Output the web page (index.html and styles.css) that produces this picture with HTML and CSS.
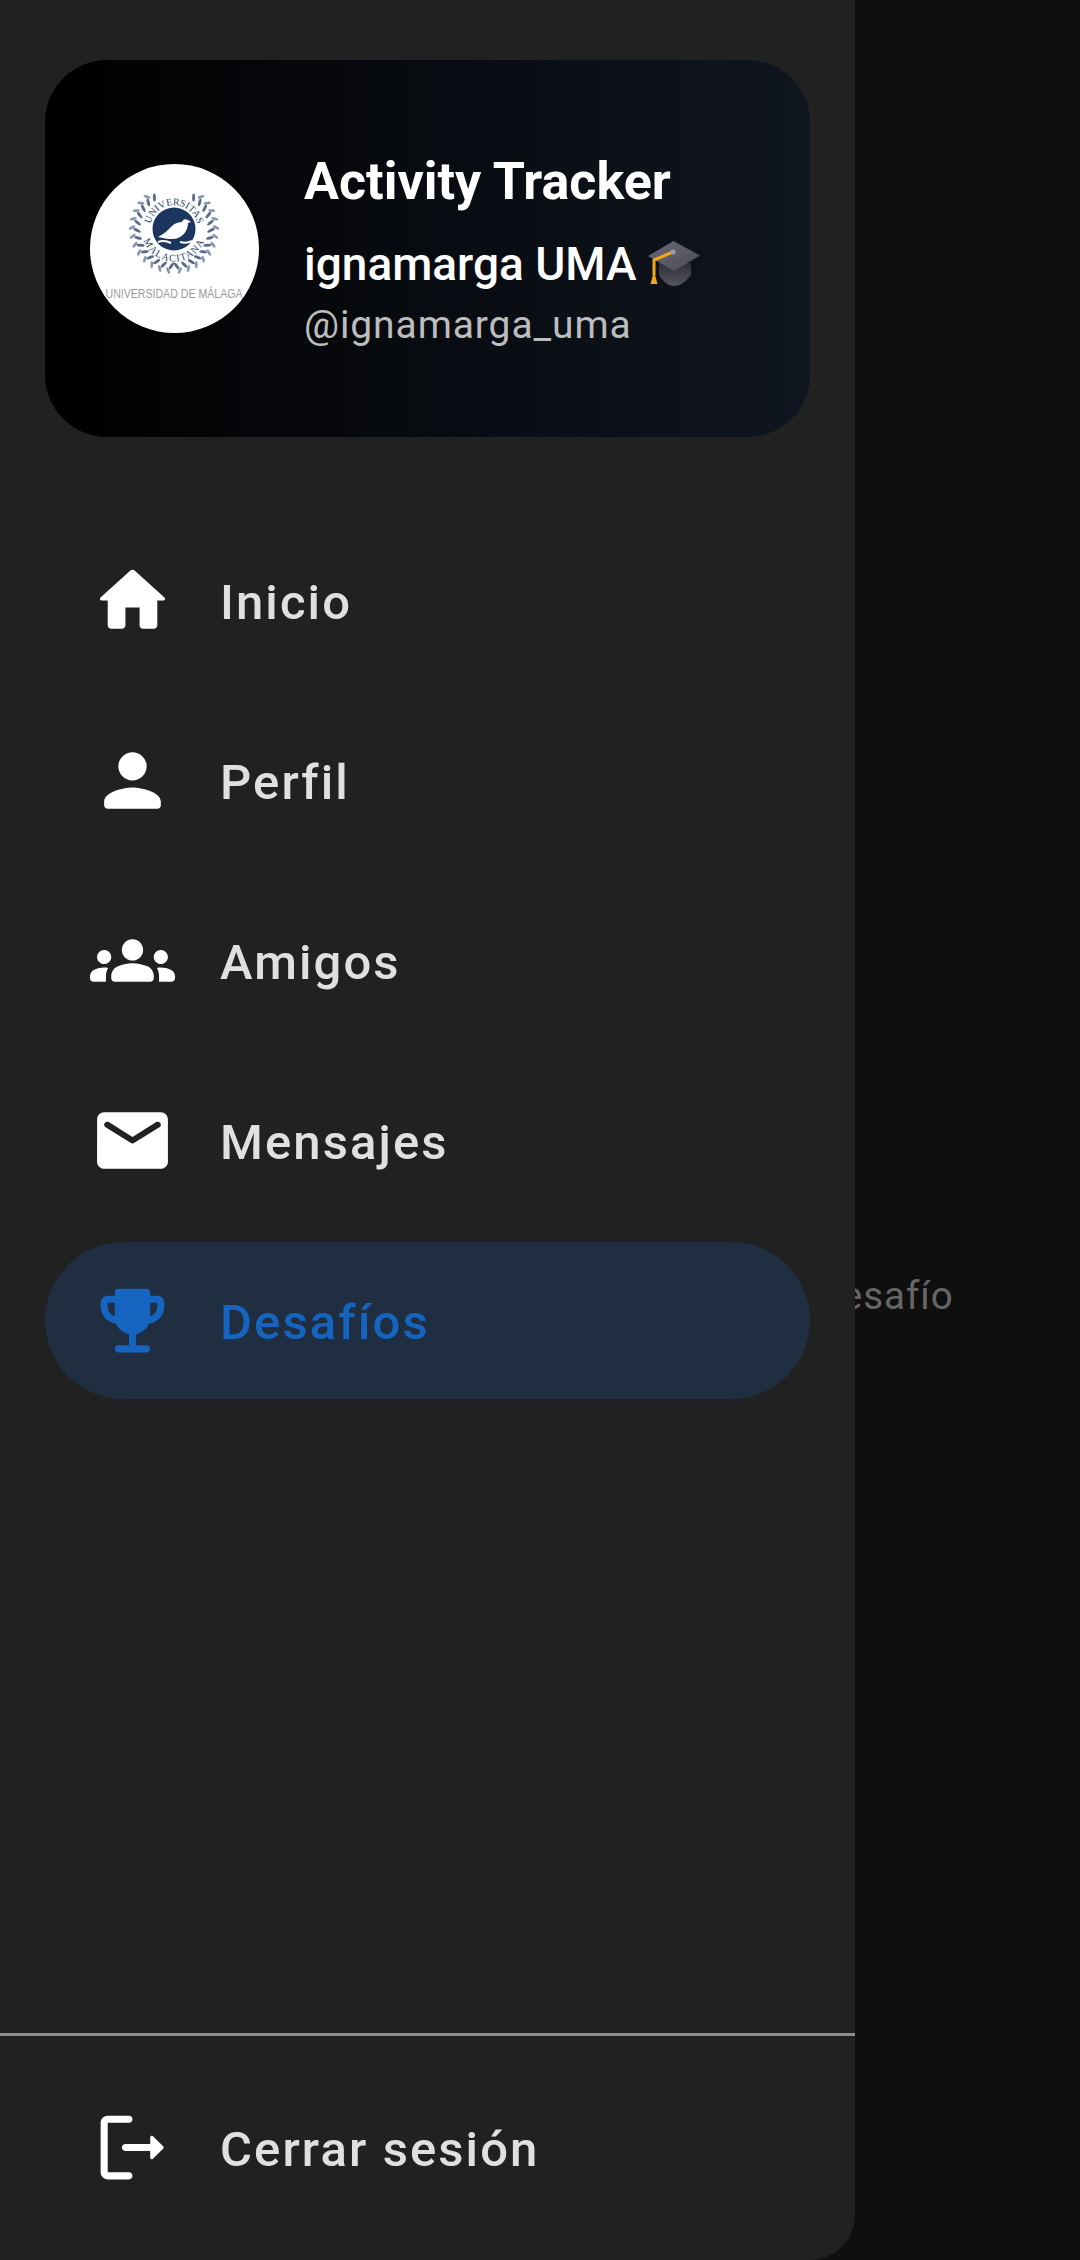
FILE: index.html
```html
<!DOCTYPE html>
<html lang="es">
<head>
<meta charset="utf-8">
<title>Activity Tracker</title>
<link rel="stylesheet" href="styles.css">
</head>
<body>
<div class="screen">
  <aside class="drawer">
    <header class="profile">
      <div class="avatar">
        <svg class="seal" viewBox="0 0 169 169">
          <defs>
            <path id="arcTop" d="M61.400 73.200a24 24 0 1 1 45.200 0"/>
            <path id="arcBottom" d="M53.400 54a32.500 32.500 0 1 0 61.200 0"/>
            <ellipse id="leaf" cx="0" cy="-37" rx="1.500" ry="4" fill="#5a6c8e"/>
            <ellipse id="leafOuter" cx="0" cy="-42" rx="1.400" ry="3.600" fill="#8795af"/>
            <g id="halfWreath">
              <use href="#leaf" transform="rotate(-176) rotate(30 0 -37)"/><use href="#leafOuter" transform="rotate(-172) rotate(-30 0 -42)"/>
              <use href="#leaf" transform="rotate(-164) rotate(30 0 -37)"/><use href="#leafOuter" transform="rotate(-160) rotate(-30 0 -42)"/>
              <use href="#leaf" transform="rotate(-152) rotate(30 0 -37)"/><use href="#leafOuter" transform="rotate(-148) rotate(-30 0 -42)"/>
              <use href="#leaf" transform="rotate(-140) rotate(30 0 -37)"/><use href="#leafOuter" transform="rotate(-136) rotate(-30 0 -42)"/>
              <use href="#leaf" transform="rotate(-128) rotate(30 0 -37)"/><use href="#leafOuter" transform="rotate(-124) rotate(-30 0 -42)"/>
              <use href="#leaf" transform="rotate(-116) rotate(30 0 -37)"/><use href="#leafOuter" transform="rotate(-112) rotate(-30 0 -42)"/>
              <use href="#leaf" transform="rotate(-104) rotate(30 0 -37)"/><use href="#leafOuter" transform="rotate(-100) rotate(-30 0 -42)"/>
              <use href="#leaf" transform="rotate(-92) rotate(30 0 -37)"/><use href="#leafOuter" transform="rotate(-88) rotate(-30 0 -42)"/>
              <use href="#leaf" transform="rotate(-80) rotate(30 0 -37)"/><use href="#leafOuter" transform="rotate(-76) rotate(-30 0 -42)"/>
              <use href="#leaf" transform="rotate(-68) rotate(30 0 -37)"/><use href="#leafOuter" transform="rotate(-64) rotate(-30 0 -42)"/>
              <use href="#leaf" transform="rotate(-56) rotate(30 0 -37)"/><use href="#leafOuter" transform="rotate(-52) rotate(-30 0 -42)"/>
              <use href="#leaf" transform="rotate(-44) rotate(30 0 -37)"/><use href="#leafOuter" transform="rotate(-40) rotate(-30 0 -42)"/>
              <use href="#leaf" transform="rotate(-32) rotate(30 0 -37)"/>
            </g>
          </defs>
          <g transform="translate(84 65)">
            <use href="#halfWreath"/>
            <use href="#halfWreath" transform="scale(-1 1)"/>
          </g>
          <circle cx="84" cy="65" r="21.500" fill="#1c355e"/>
          <path d="M68 73C74 70 78 66 82 62 85 59 89 58 92 58 92 56 95 54 98 56L101 58 98 59C98 65 95 71 88 74 83 76 76 75 68 73z" fill="#fff"/>
          <path d="M68 78c5-2 9-1 13 1M90 78c4 1 8 1 12-1" stroke="#fff" stroke-width="2" fill="none"/>
          <text class="seal-ring" text-anchor="middle"><textPath href="#arcTop" startOffset="50%">UNIVERSITAS</textPath></text>
          <text class="seal-ring seal-ring-wide" text-anchor="middle"><textPath href="#arcBottom" startOffset="50%">MALACITANA</textPath></text>
          <text class="seal-name" x="84" y="134" text-anchor="middle" textLength="137" lengthAdjust="spacingAndGlyphs">UNIVERSIDAD DE MÁLAGA</text>
        </svg>
      </div>
      <div class="identity">
        <div class="app-name">Activity Tracker</div>
        <div class="user-name">ignamarga UMA
          <svg class="cap" viewBox="0 0 52 46">
            <defs>
              <linearGradient id="capTop" x1="0" y1="0" x2="1" y2="1"><stop offset="0" stop-color="#6a6a76"/><stop offset="1" stop-color="#4a4a57"/></linearGradient>
              <linearGradient id="capBody" x1="0" y1="0" x2="0" y2="1"><stop offset="0" stop-color="#2e2e38"/><stop offset="1" stop-color="#55555f"/></linearGradient>
            </defs>
            <path d="M11 22V34C16 42 21 45 26 45 31 45 37 42 43 34V22z" fill="url(#capBody)"/>
            <path d="M25.500 0 52 14.500 26 30 0 15z" fill="url(#capTop)"/>
            <path d="M25 11 6 19V34" stroke="#f2a71b" stroke-width="3" fill="none"/>
            <path d="M2.500 43 6 30 9.500 43z" fill="#f2a71b"/>
            <circle cx="25" cy="11" r="2.600" fill="#9a9aa6"/>
          </svg>
        </div>
        <div class="handle">@ignamarga_uma</div>
      </div>
    </header>

    <nav class="menu">
      <a class="item">
        <svg class="icon" viewBox="0 0 24 24"><path d="M10 19v-5h4v5c0 .55.45 1 1 1h3c.55 0 1-.45 1-1v-7h1.7c.46 0 .68-.57.33-.87L12.67 3.6c-.38-.34-.96-.34-1.34 0l-8.36 7.53c-.34.3-.13.87.33.87H5v7c0 .55.45 1 1 1h3c.55 0 1-.45 1-1z"/></svg>
        <span>Inicio</span>
      </a>
      <a class="item">
        <svg class="icon" viewBox="0 0 24 24"><path d="M12 12c2.21 0 4-1.79 4-4s-1.79-4-4-4-4 1.79-4 4 1.79 4 4 4zm0 2c-2.67 0-8 1.34-8 4v1c0 .55.45 1 1 1h14c.55 0 1-.45 1-1v-1c0-2.66-5.33-4-8-4z"/></svg>
        <span>Perfil</span>
      </a>
      <a class="item">
        <svg class="icon" viewBox="0 0 24 24"><path d="M12 12.75c1.63 0 3.07.39 4.24.9 1.08.48 1.76 1.56 1.76 2.73V17c0 .55-.45 1-1 1H7c-.55 0-1-.45-1-1v-.61c0-1.18.68-2.26 1.76-2.73 1.17-.52 2.61-.91 4.24-.91zM4 13c1.1 0 2-.9 2-2s-.9-2-2-2-2 .9-2 2 .9 2 2 2zm1.13 1.1c-.37-.06-.74-.1-1.13-.1-.99 0-1.93.21-2.78.58C.48 14.9 0 15.62 0 16.43V17c0 .55.45 1 1 1h3.5v-1.61c0-.83.23-1.61.63-2.29zM20 13c1.1 0 2-.9 2-2s-.9-2-2-2-2 .9-2 2 .9 2 2 2zm4 3.43c0-.81-.48-1.53-1.22-1.85-.85-.37-1.79-.58-2.78-.58-.39 0-.76.04-1.13.1.4.68.63 1.46.63 2.29V18H23c.55 0 1-.45 1-1v-.57zM12 6c1.66 0 3 1.34 3 3s-1.34 3-3 3-3-1.34-3-3 1.34-3 3-3z"/></svg>
        <span>Amigos</span>
      </a>
      <a class="item">
        <svg class="icon" viewBox="0 0 24 24"><path d="M20 4H4c-1.1 0-1.99.9-1.99 2L2 18c0 1.1.9 2 2 2h16c1.1 0 2-.9 2-2V6c0-1.1-.9-2-2-2zm-.4 4.25l-7.07 4.42c-.32.2-.74.2-1.06 0L4.4 8.25c-.25-.16-.4-.43-.4-.72 0-.67.73-1.07 1.3-.72L12 11l6.7-4.19c.57-.35 1.3.05 1.3.72 0 .29-.15.56-.4.72z"/></svg>
        <span>Mensajes</span>
      </a>
      <a class="item item-active">
        <svg class="icon" viewBox="0 0 24 24"><path d="M19 5h-2V4c0-.55-.45-1-1-1H8c-.55 0-1 .45-1 1v1H5c-1.1 0-2 .9-2 2v1c0 2.55 1.92 4.63 4.39 4.94.63 1.5 1.98 2.63 3.61 2.96V19H8c-.55 0-1 .45-1 1s.45 1 1 1h8c.55 0 1-.45 1-1s-.45-1-1-1h-3v-3.1c1.63-.33 2.98-1.46 3.61-2.96C19.08 12.63 21 10.55 21 8V7c0-1.1-.9-2-2-2zM5 8V7h2v3.82C5.84 10.4 5 9.3 5 8zm14 0c0 1.3-.84 2.4-2 2.82V7h2v1z"/></svg>
        <span>Desafíos</span>
      </a>
    </nav>

    <footer class="drawer-foot">
      <a class="item">
        <svg class="icon" viewBox="0 0 24 24"><path d="M5 5h6c.55 0 1-.45 1-1s-.45-1-1-1H5c-1.1 0-2 .9-2 2v14c0 1.1.9 2 2 2h6c.55 0 1-.45 1-1s-.45-1-1-1H5V5zM20.65 11.65l-2.79-2.79c-.31-.31-.86-.1-.86.35V11h-7c-.55 0-1 .45-1 1s.45 1 1 1h7v1.79c0 .45.54.67.85.35l2.79-2.79c.2-.19.2-.51.01-.7z"/></svg>
        <span>Cerrar sesión</span>
      </a>
    </footer>
  </aside>
  <main class="behind">
    <p class="behind-text">desafío</p>
  </main>
</div>
</body>
</html>
```
FILE: styles.css
```css
* { box-sizing: border-box; }
html, body { margin: 0; padding: 0; background: #0f0f0f; }
body { font-family: Roboto, "Noto Sans", sans-serif; }

.screen {
  display: flex;
  width: 1080px;
  height: 2260px;
  overflow: hidden;
}

.drawer {
  position: relative;
  z-index: 1;
  flex: 0 0 855px;
  display: flex;
  flex-direction: column;
  padding-top: 60px;
  background: #212121;
  border-bottom-right-radius: 45px;
}

.profile {
  display: flex;
  align-items: center;
  gap: 45px;
  height: 377px;
  margin: 0 45px;
  padding-left: 45px;
  border-radius: 62px;
  background: linear-gradient(90deg, #000 0%, #101620 100%);
}

.avatar {
  flex: 0 0 169px;
  width: 169px;
  height: 169px;
  border-radius: 50%;
  background: #fff;
}
.seal { display: block; width: 169px; height: 169px; }
.seal-ring { font-family: "Liberation Serif", serif; font-size: 10px; fill: #2a3f68; }
.seal-ring-wide { letter-spacing: 1.2px; }
.seal-name { font-family: "Liberation Sans", sans-serif; font-size: 13px; fill: #9a9a9a; }

.identity { display: flex; flex-direction: column; padding-top: 5px; }
.app-name {
  font-size: 52px;
  line-height: 56px;
  font-weight: 700;
  color: #fff;
}
.user-name {
  display: flex;
  align-items: center;
  gap: 12px;
  margin-top: 28px;
  font-size: 46px;
  line-height: 52px;
  font-weight: 500;
  color: #fff;
}
.cap { width: 52px; height: 46px; }
.handle {
  margin-top: 12px;
  font-size: 39px;
  line-height: 46px;
  letter-spacing: 0.9px;
  color: #bdbdbd;
}

.menu {
  display: flex;
  flex-direction: column;
  gap: 23px;
  margin-top: 85px;
  padding: 0 45px;
}

.item {
  display: flex;
  align-items: center;
  gap: 45px;
  height: 157px;
  padding-left: 45px;
  border-radius: 79px;
  font-size: 49px;
  font-weight: 500;
  letter-spacing: 2.1px;
  color: #e0e0e0;
}
.item span { padding-top: 3px; }
.icon { flex: 0 0 85px; width: 85px; height: 85px; fill: #fff; }

.item-active { background: #1f2e40; color: #1565c0; }
.item-active .icon { fill: #1565c0; }

.drawer-foot {
  margin-top: auto;
  padding: 33px 45px 34px;
  border-top: 3px solid #8f8f8f;
}

.behind { flex: 1; min-width: 0; padding-top: 1273px; }
.behind-text {
  margin: 0 0 0 -36px;
  font-size: 38.5px;
  line-height: 46px;
  letter-spacing: 1px;
  color: #666;
}
```
